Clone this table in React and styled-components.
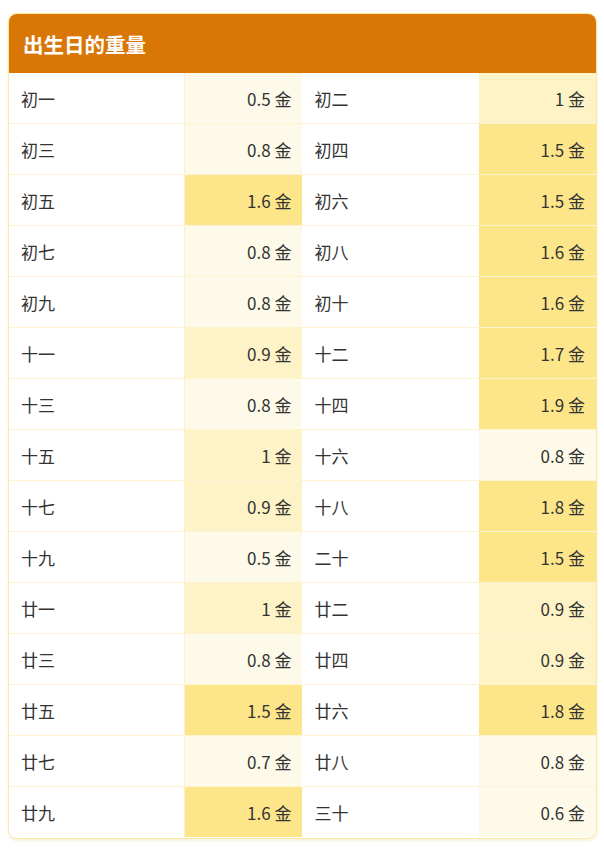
import styled, { createGlobalStyle } from "styled-components";

const GlobalStyle = createGlobalStyle`
  body {
    margin: 0;
    background: #fff;
    font-family: "Noto Sans CJK SC", "Noto Sans", sans-serif;
  }
`;

const Page = styled.div`
  padding: 13px 7px 14px 8px;
`;

const Card = styled.div`
  border: 1px solid #fce9a6;
  border-radius: 9px;
  overflow: hidden;
  background: #fff;
  box-shadow: 0 2px 3px rgba(200, 170, 60, 0.18);
`;

const Header = styled.div`
  background: #d97706;
  color: #fff;
  font-size: 20.5px;
  font-weight: 700;
  height: 59px;
  display: flex;
  align-items: center;
  padding: 0 14px;
`;

const Table = styled.div`
  display: grid;
  grid-template-columns: 30% 20% 30% 20%;
  padding-bottom: 1px;
`;

const shades = {
  low: "#fefae9",
  mid: "#fef3c7",
  high: "#fde68a",
};

const Label = styled.div`
  height: 50px;
  display: flex;
  align-items: center;
  padding: 0 12px;
  font-size: 17px;
  color: #333;
  background: #fff;
  border-top: ${(p) => (p.$first ? "none" : "1px solid #fdf3d2")};
  border-right: ${(p) => (p.$left ? "1px solid #fbf0c8" : "none")};
`;

const Value = styled.div`
  height: 50px;
  display: flex;
  align-items: center;
  justify-content: flex-end;
  padding: 0 11px;
  font-size: 17px;
  color: #333;
  background: ${(p) => shades[p.$level]};
  border-top: ${(p) => (p.$first ? "none" : "1px solid #fdf3d2")};
`;

const days = [
  ["初一", 0.5], ["初二", 1],
  ["初三", 0.8], ["初四", 1.5],
  ["初五", 1.6], ["初六", 1.5],
  ["初七", 0.8], ["初八", 1.6],
  ["初九", 0.8], ["初十", 1.6],
  ["十一", 0.9], ["十二", 1.7],
  ["十三", 0.8], ["十四", 1.9],
  ["十五", 1], ["十六", 0.8],
  ["十七", 0.9], ["十八", 1.8],
  ["十九", 0.5], ["二十", 1.5],
  ["廿一", 1], ["廿二", 0.9],
  ["廿三", 0.8], ["廿四", 0.9],
  ["廿五", 1.5], ["廿六", 1.8],
  ["廿七", 0.7], ["廿八", 0.8],
  ["廿九", 1.6], ["三十", 0.6],
];

const level = (w) => (w >= 1.5 ? "high" : w >= 0.9 ? "mid" : "low");

export default function App() {
  return (
    <>
      <GlobalStyle />
      <Page>
        <Card>
          <Header>出生日的重量</Header>
          <Table>
            {days.map(([day, w], i) => {
              const first = i < 2;
              return [
                <Label key={day + "l"} $first={first} $left={i % 2 === 0}>
                  {day}
                </Label>,
                <Value key={day + "v"} $first={first} $level={level(w)}>
                  {w} 金
                </Value>,
              ];
            })}
          </Table>
        </Card>
      </Page>
    </>
  );
}
